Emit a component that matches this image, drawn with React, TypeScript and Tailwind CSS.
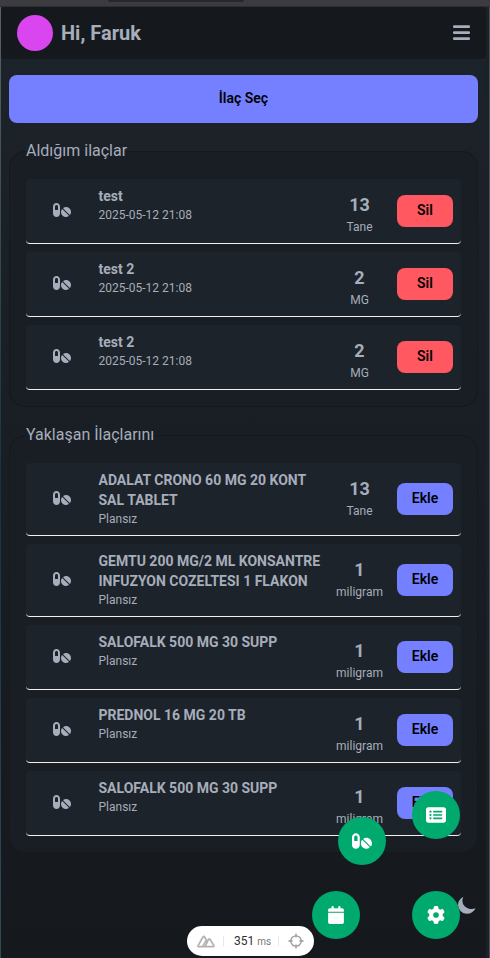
import React from 'react';
import { FaPills, FaCalendar, FaGear, FaRectangleList } from 'react-icons/fa6';

type Item = { name: string; sub: string; amount: number; unit: string };

const taken: Item[] = [
  { name: 'test', sub: '2025-05-12 21:08', amount: 13, unit: 'Tane' },
  { name: 'test 2', sub: '2025-05-12 21:08', amount: 2, unit: 'MG' },
  { name: 'test 2', sub: '2025-05-12 21:08', amount: 2, unit: 'MG' },
];

const upcoming: Item[] = [
  { name: 'ADALAT CRONO 60 MG 20 KONT SAL TABLET', sub: 'Plansız', amount: 13, unit: 'Tane' },
  { name: 'GEMTU 200 MG/2 ML KONSANTRE INFUZYON COZELTESI 1 FLAKON', sub: 'Plansız', amount: 1, unit: 'miligram' },
  { name: 'SALOFALK 500 MG 30 SUPP', sub: 'Plansız', amount: 1, unit: 'miligram' },
  { name: 'PREDNOL 16 MG 20 TB', sub: 'Plansız', amount: 1, unit: 'miligram' },
  { name: 'SALOFALK 500 MG 30 SUPP', sub: 'Plansız', amount: 1, unit: 'miligram' },
];

function Row({ item, action }: { item: Item; action: 'Sil' | 'Ekle' }) {
  const color = action === 'Sil' ? 'bg-[#ff5861]' : 'bg-[#7480ff]';
  return (
    <li className="flex items-center rounded border-b border-[#f0f0f0] bg-[#1d232a] pr-2">
      <div className="flex w-[72.5px] shrink-0 justify-center pb-0.5">
        <FaPills className="size-[18px]" />
      </div>
      <div className="min-h-16 w-[226px] shrink-0 self-stretch pt-[7px] pb-2">
        <h3 className="text-sm leading-5 font-bold">{item.name}</h3>
        <p className="pt-px text-xs leading-4">{item.sub}</p>
      </div>
      <div className="flex w-[70px] shrink-0 flex-col items-center self-start pt-3">
        <span className="text-lg leading-7 font-bold">{item.amount}</span>
        <span className="text-xs leading-4">{item.unit}</span>
      </div>
      <button className={`ml-auto h-8 w-14 rounded-lg pb-0.5 text-sm font-semibold text-black ${color}`}>{action}</button>
    </li>
  );
}

function Section({ title, items, action }: { title: string; items: Item[]; action: 'Sil' | 'Ekle' }) {
  return (
    <fieldset className="rounded-2xl border border-[#15191e] bg-[#191e24] px-4 pt-4 pb-4">
      <legend className="h-6 text-base leading-6">{title}</legend>
      <ul className="flex flex-col gap-2">
        {items.map((item, i) => (
          <Row key={i} item={item} action={action} />
        ))}
      </ul>
    </fieldset>
  );
}

function Fab({ className, children }: { className: string; children: React.ReactNode }) {
  return (
    <button className={`absolute flex size-12 items-center justify-center rounded-full bg-[#00a96e] text-white ${className}`}>
      {children}
    </button>
  );
}

function DevTools() {
  return (
    <div className="absolute top-[926px] left-[187px] flex h-[30px] w-[127px] items-center rounded-full bg-white px-[10px] text-[#b3b3b3]">
      <svg className="h-[13px] w-[18px]" viewBox="0 0 18 13" fill="none" stroke="currentColor" strokeWidth="1.7" strokeLinejoin="round" strokeLinecap="round">
        <path d="M8 11.7H1.6Q.7 11.5 1.1 10.6L6 2Q6.8.8 7.6 2L9.4 5L5.6 11.7M8 11.7H16Q17.2 11.5 16.8 10.5L13.1 4.4Q12.3 3.4 11.6 4.4L8 11.7" />
      </svg>
      <span className="ml-2 h-[10px] w-px bg-[#e8e8e8]" />
      <span className="ml-[10px] text-[12px] text-[#303030]">351</span>
      <span className="ml-[3px] text-[10px] text-[#777]">ms</span>
      <span className="ml-auto h-[10px] w-px bg-[#e8e8e8]" />
      <svg className="ml-[9px] size-4" viewBox="0 0 16 16" fill="none" stroke="#999" strokeWidth="1.3">
        <circle cx="8" cy="8" r="5.2" />
        <path d="M8 .5v4M8 11.5v4M.5 8h4M11.5 8h4" />
      </svg>
    </div>
  );
}

export default function App() {
  return (
    <div className="relative h-[958px] w-[490px] overflow-hidden bg-linear-to-b from-[#1d232a] to-[#15191e] font-[Roboto,sans-serif] text-[#a6adbb]">
      <div className="flex h-[7px] justify-start border-b border-[#2b2d31] bg-[#3c3b40] pl-[108px]">
        <div className="h-0.5 w-[136px] rounded-b bg-[#27282c]" />
      </div>
      <div className="flex h-[951px]">
        <div className="w-px shrink-0 bg-linear-to-b from-[#596265] via-[#123442] to-[#304b56]" />
        <main className="w-[485px] shrink-0">
          <header className="flex h-[52px] items-center rounded bg-[#15191e] pr-4 pl-4">
            <div className="size-9 rounded-full bg-[#d946ef]" />
            <h1 className="ml-2 text-xl leading-7 font-bold">Hi, Faruk</h1>
            <svg className="ml-auto h-4 w-[17px]" viewBox="0 0 17 16" fill="none" stroke="currentColor" strokeWidth="2.7" strokeLinecap="round">
              <path d="M1.2 1.6h14.6M1.2 7.6h14.6M1.2 13.6h14.6" />
            </svg>
          </header>
          <div className="flex flex-col py-4 pr-2 pl-2">
            <button className="mb-4 h-12 rounded-lg bg-[#7480ff] pb-0.5 text-sm font-semibold text-black">İlaç Seç</button>
            <Section title="Aldığım ilaçlar" items={taken} action="Sil" />
            <div className="h-4" />
            <Section title="Yaklaşan İlaçlarını" items={upcoming} action="Ekle" />
          </div>
        </main>
        <div className="flex flex-1 justify-end bg-[#1b2127]">
          <div className="w-px bg-[#465055]" />
        </div>
      </div>
      <Fab className="top-[791px] left-[412px]"><FaRectangleList className="size-5" /></Fab>
      <Fab className="top-[817px] left-[338px]"><FaPills className="size-5" /></Fab>
      <Fab className="top-[891px] left-[312px]"><FaCalendar className="size-[18px]" /></Fab>
      <svg className="absolute top-[896px] left-[457px] h-[18px] w-[19px]" viewBox="0 0 19 18" fill="currentColor">
        <path d="M6.4.8C3 2.6 1 5.6 1 9A9 9 0 0 0 10 17.8C13.8 17.8 17 15.8 18.6 12.3C16.6 13 14.2 13.3 12 12.7C7.4 11.5 5 7.5 5.5 3.8Q5.7 2 6.4.8Z" />
      </svg>
      <Fab className="top-[891px] left-[412px]"><FaGear className="size-[18px]" /></Fab>
      <DevTools />
    </div>
  );
}
